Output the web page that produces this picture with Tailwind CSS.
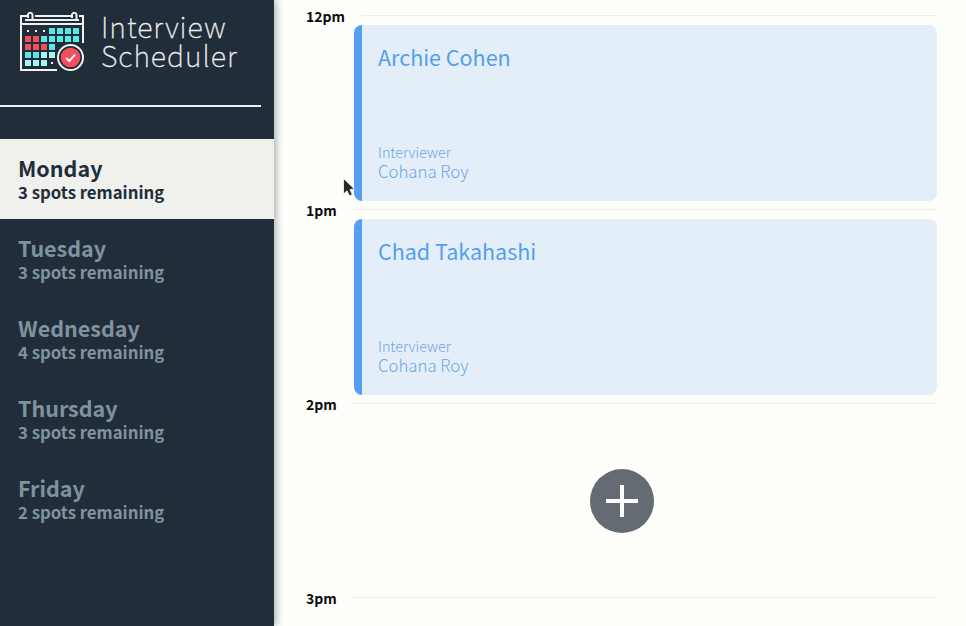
<!DOCTYPE html>
<html lang="en">
<head>
<meta charset="utf-8">
<title>Interview Scheduler</title>
<script src="https://cdn.jsdelivr.net/npm/@tailwindcss/browser@4"></script>
</head>
<body class="relative flex h-[626px] w-[966px] overflow-hidden bg-[#fefffb] font-['Noto_Sans_CJK_JP','Noto_Sans',sans-serif]">
<aside class="h-full w-[274px] shrink-0 bg-[#212e39] shadow-[2px_0_8px_rgba(33,46,57,0.4)]">
  <header class="flex h-[105px] pl-5 pt-[11px]">
    <svg class="h-[61px] w-[65px] shrink-0" viewBox="20 11 65 61" fill="none">
      <g stroke="#f2f2f5" stroke-width="2">
        <path d="M27 16H21V70H57M35 16H71M79 16H83V43M21 24H83M25 20H79"/>
        <path d="M28 18V14.5a2.3 2.3 0 0 1 4.5 0V20M72 18V14.5a2.3 2.3 0 0 1 4.5 0V20"/>
      </g>
      <path fill="#58e8e8" d="M49 28h6v6h-6zM57 28h6v6h-6zM65 28h6v6h-6zM73 28h6v6h-6zM41 36h6v6h-6zM49 36h6v6h-6zM57 36h6v6h-6zM65 36h6v6h-6zM73 36h6v6h-6zM49 44h6v6h-6zM25 52h6v6h-6zM33 52h6v6h-6z"/>
      <path fill="#f1505c" d="M25 36h6v6h-6zM33 36h6v6h-6zM25 44h6v6h-6zM33 44h6v6h-6zM41 44h6v6h-6z"/>
      <path fill="#a6f6f3" d="M41 52h6v6h-6zM49 52h6v6h-6zM25 60h6v6h-6zM33 60h6v6h-6zM41 60h6v6h-6z"/>
      <path fill="#f2f2f5" d="M27 30h2v2h-2zM35 30h2v2h-2zM43 30h2v2h-2zM51 62h2v2h-2z"/>
      <circle cx="70.5" cy="57.5" r="12.5" fill="#212e39" stroke="#f2f2f5" stroke-width="2"/>
      <circle cx="70.5" cy="57.5" r="9.8" fill="#f1505c"/>
      <path stroke="#f2f2f5" stroke-width="2" d="M66 58L69.3 61L75 54.7"/>
    </svg>
    <h1 class="ml-4 text-[28.65px] font-thin leading-[29px] tracking-[1px] text-[#f0f0ed] [-webkit-text-stroke:0.35px_#f0f0ed]">Interview<br>Scheduler</h1>
  </header>
  <div class="h-0.5 w-[261px] bg-[#f0f0ed]"></div>
  <ul class="mt-8 whitespace-nowrap font-bold text-[#8092a0]">
    <li class="h-20 bg-[#f0f0ed] pl-[18px] pt-[17px] text-[#212e39]"><h2 class="text-[21.5px] leading-6">Monday</h2><p class="text-[16.75px] leading-6">3 spots remaining</p></li>
    <li class="h-20 pl-[18px] pt-[17px]"><h2 class="text-[21.5px] leading-6">Tuesday</h2><p class="text-[16.75px] leading-6">3 spots remaining</p></li>
    <li class="h-20 pl-[18px] pt-[17px]"><h2 class="text-[21.5px] leading-6">Wednesday</h2><p class="text-[16.75px] leading-6">4 spots remaining</p></li>
    <li class="h-20 pl-[18px] pt-[17px]"><h2 class="text-[21.5px] leading-6">Thursday</h2><p class="text-[16.75px] leading-6">3 spots remaining</p></li>
    <li class="h-20 pl-[18px] pt-[17px]"><h2 class="text-[21.5px] leading-6">Friday</h2><p class="text-[16.75px] leading-6">2 spots remaining</p></li>
  </ul>
</aside>
<main class="w-[663px] pl-8 pt-[7px]">
  <section class="h-[194px]">
    <header class="flex h-[18px]"><h4 class="w-[55px] text-[14px] font-bold leading-[18px] text-[#0c0c0c]">12pm</h4><div class="mt-2 h-px flex-1 bg-[#eeefec]"></div></header>
    <article class="ml-12 flex h-44 flex-col justify-between rounded-lg border-l-8 border-[#549fef] bg-[#e4eef9] px-4 pb-5 pt-5 text-[#549fef]">
      <h2 class="text-[21.5px] leading-6">Archie Cohen</h2>
      <div class="font-light text-[#6ca6e8]"><h4 class="text-[14.3px] leading-[18px]">Interviewer</h4><h3 class="text-[16.75px] leading-5">Cohana Roy</h3></div>
    </article>
  </section>
  <section class="h-[194px]">
    <header class="flex h-[18px]"><h4 class="w-[47px] text-[14px] font-bold leading-[18px] text-[#0c0c0c]">1pm</h4><div class="mt-2 h-px flex-1 bg-[#eeefec]"></div></header>
    <article class="ml-12 flex h-44 flex-col justify-between rounded-lg border-l-8 border-[#549fef] bg-[#e4eef9] px-4 pb-5 pt-5 text-[#549fef]">
      <h2 class="text-[21.5px] leading-6">Chad Takahashi</h2>
      <div class="font-light text-[#6ca6e8]"><h4 class="text-[14.3px] leading-[18px]">Interviewer</h4><h3 class="text-[16.75px] leading-5">Cohana Roy</h3></div>
    </article>
  </section>
  <section class="h-[194px]">
    <header class="flex h-[18px]"><h4 class="w-[47px] text-[14px] font-bold leading-[18px] text-[#0c0c0c]">2pm</h4><div class="mt-2 h-px flex-1 bg-[#eeefec]"></div></header>
    <div class="flex h-44 items-center justify-center pl-px">
      <button class="flex size-16 items-center justify-center rounded-full bg-[#646b73]" aria-label="Add appointment"><svg class="size-8" viewBox="0 0 32 32" stroke="#fefffb" stroke-width="4"><path d="M16 0V32M0 16H32"/></svg></button>
    </div>
  </section>
  <section>
    <header class="flex h-[18px]"><h4 class="w-[47px] text-[14px] font-bold leading-[18px] text-[#0c0c0c]">3pm</h4><div class="mt-2 h-px flex-1 bg-[#eeefec]"></div></header>
  </section>
</main>
<svg class="absolute left-[342px] top-[177px] h-[20px] w-[14px]" viewBox="0 0 14 20"><path d="M1.5 1.5V17L5 13.8L7.6 19L10.3 17.6L8 12.5L12.5 12Z" fill="#292929" stroke="#e8ebec" stroke-width="1"/></svg>
</body>
</html>
